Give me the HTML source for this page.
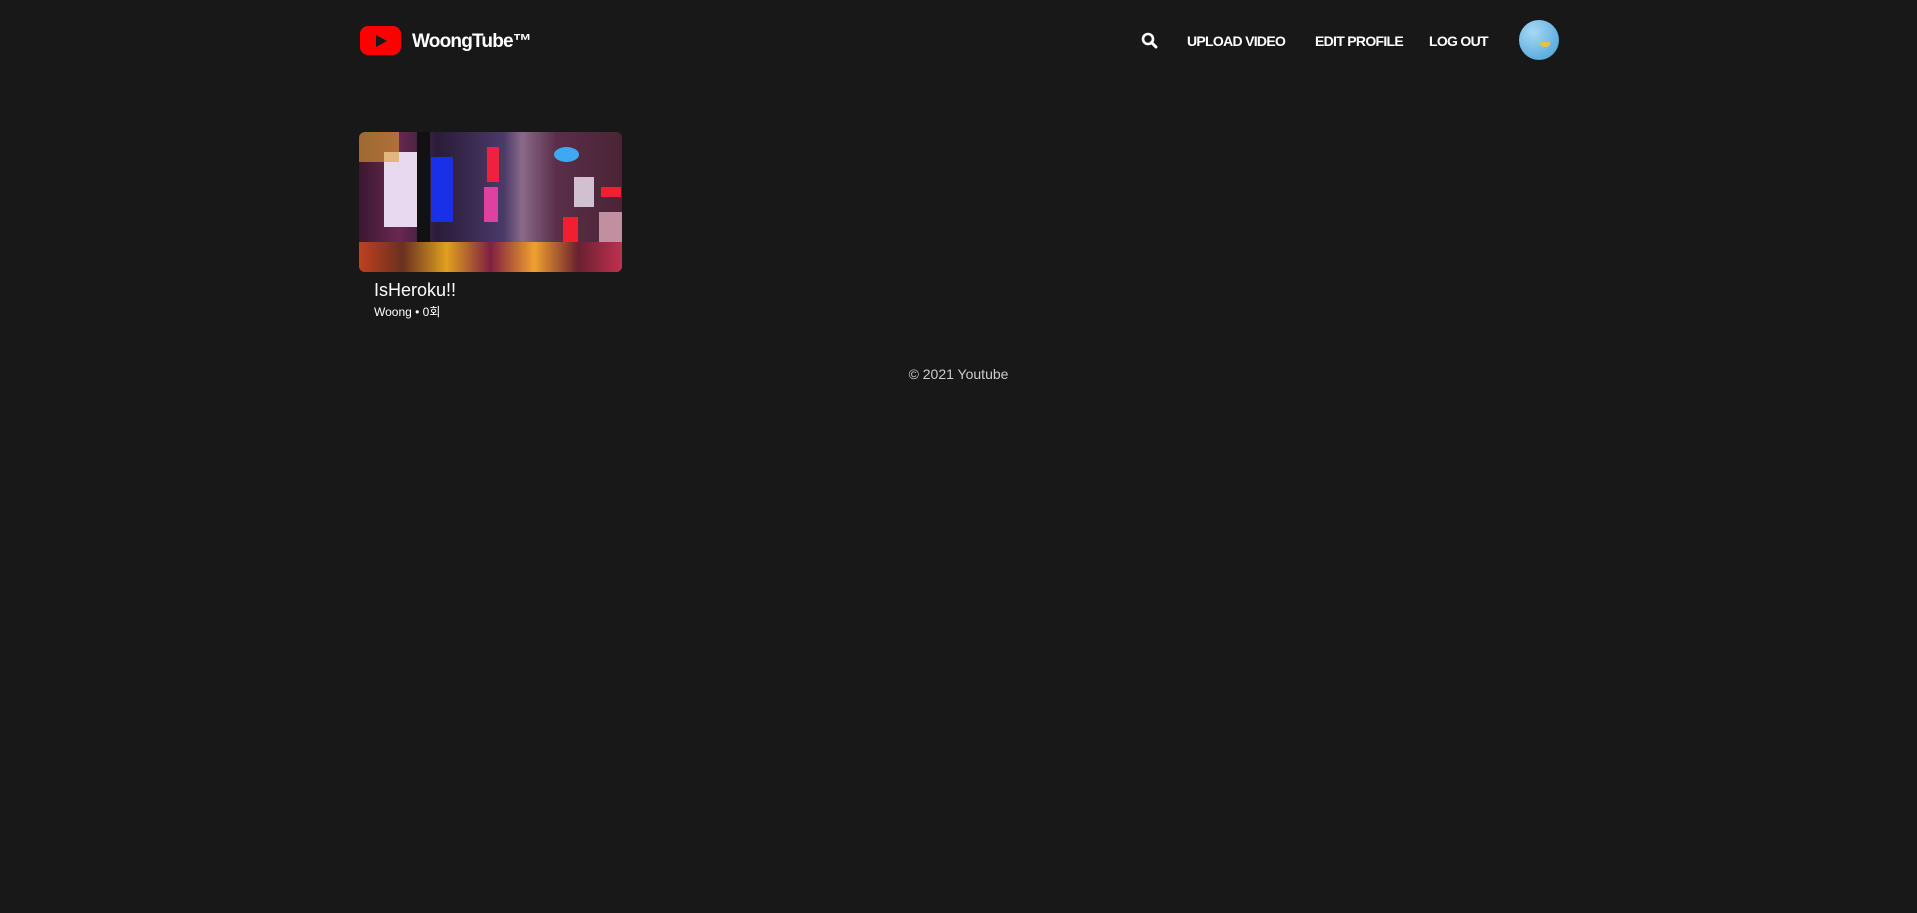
<!DOCTYPE html>
<html><head><meta charset="utf-8"><style>
body{margin:0;width:1917px;height:913px;background:#181818;font-family:"Liberation Sans","Noto Sans CJK KR",sans-serif;color:#fff;position:relative;overflow:hidden}
.a{position:absolute}
.nav{font-weight:bold;font-size:14px;top:33px;letter-spacing:-0.7px}
</style></head><body>
<div class="a" style="left:360px;top:26px;width:41px;height:29px;background:#f00;border-radius:8px"></div>
<div class="a" style="left:376px;top:35px;width:0;height:0;border-left:11px solid #181818;border-top:6px solid transparent;border-bottom:6px solid transparent"></div>
<div class="a" style="left:412px;top:31px;font-size:19px;font-weight:bold;letter-spacing:-0.8px">WoongTube™</div>
<svg class="a" style="left:1141px;top:32px" width="17" height="17" viewBox="0 0 17 17"><circle cx="7" cy="7" r="5" fill="none" stroke="#fff" stroke-width="2.6"/><path d="M10.5 10.5L15 15" stroke="#fff" stroke-width="3" stroke-linecap="round"/></svg>
<div class="a nav" style="left:1187px">UPLOAD VIDEO</div>
<div class="a nav" style="left:1315px">EDIT PROFILE</div>
<div class="a nav" style="left:1429px">LOG OUT</div>
<div class="a" style="left:1519px;top:20px;width:40px;height:40px;border-radius:50%;background:radial-gradient(circle at 35% 30%,#a8d8f5,#5fb0e0 70%,#4a9fd0)"></div>
<div class="a" style="left:1540px;top:42px;width:10px;height:5px;background:#e3c34a;border-radius:0 0 4px 4px"></div>
<div class="a" style="left:359px;top:132px;width:263px;height:140px;border-radius:6px;overflow:hidden;background:linear-gradient(90deg,#3a1830 0%,#6a2850 15%,#2a1c3a 30%,#4a3a68 55%,#8a6a88 62%,#5a2e4a 75%,#4a2434 100%)">
<div class="a" style="left:25px;top:20px;width:33px;height:75px;background:#e8d8f0"></div>
<div class="a" style="left:72px;top:25px;width:22px;height:65px;background:#1a30e8"></div>
<div class="a" style="left:58px;top:0;width:13px;height:110px;background:#111"></div>
<div class="a" style="left:128px;top:15px;width:12px;height:35px;background:#f02040"></div>
<div class="a" style="left:125px;top:55px;width:14px;height:35px;background:#e040a0"></div>
<div class="a" style="left:195px;top:15px;width:25px;height:15px;background:#40a8f0;border-radius:50%"></div>
<div class="a" style="left:215px;top:45px;width:20px;height:30px;background:#d0c0d0"></div>
<div class="a" style="left:242px;top:55px;width:20px;height:10px;background:#f02030"></div>
<div class="a" style="left:204px;top:85px;width:15px;height:25px;background:#f02030"></div>
<div class="a" style="left:240px;top:80px;width:23px;height:60px;background:#c090a0"></div>
<div class="a" style="left:0;top:110px;width:263px;height:30px;background:linear-gradient(90deg,#c04020,#6a3020,#e0a020,#802040,#f0a030,#6a2030,#c03050)"></div>
<div class="a" style="left:0;top:0;width:40px;height:30px;background:#e0a030;opacity:.6"></div>
</div>
<div class="a" style="left:374px;top:280px;font-size:18px">IsHeroku!!</div>
<div class="a" style="left:374px;top:303px;font-size:12px">Woong • 0회</div>
<div class="a" style="left:0;width:1917px;text-align:center;top:366px;font-size:14px;color:#ccc">© 2021 Youtube</div>
</body></html>
